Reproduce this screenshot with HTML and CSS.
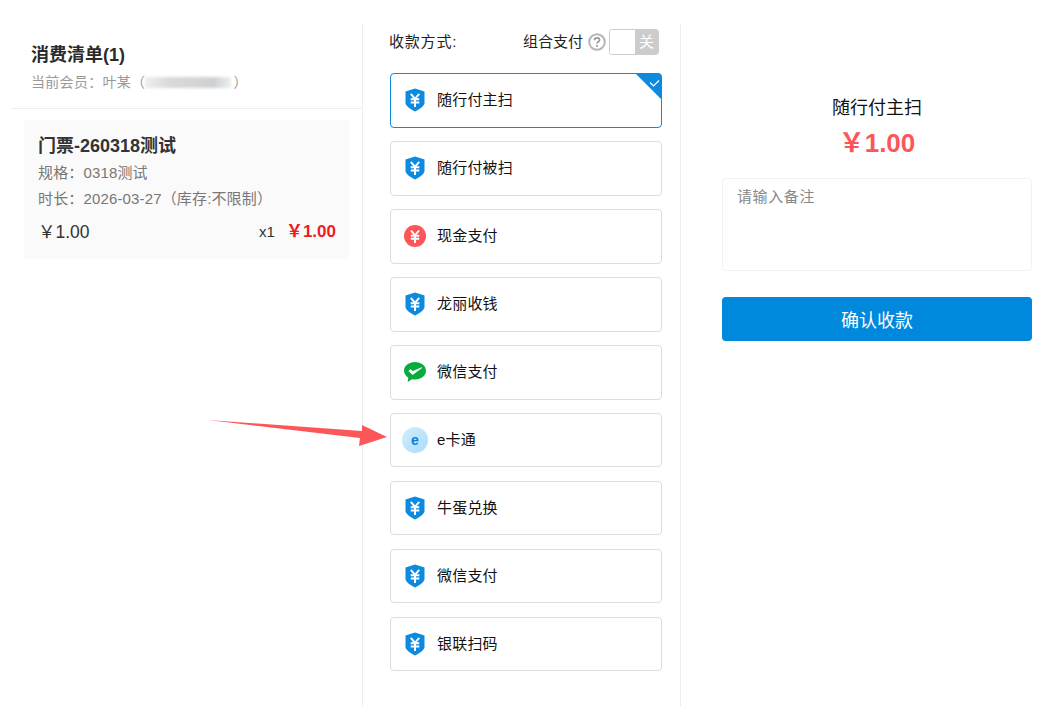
FILE: index.html
```html
<!DOCTYPE html>
<html lang="zh">
<head>
<meta charset="utf-8">
<title>收款</title>
<link rel="stylesheet" href="styles.css">
</head>
<body>
<svg width="0" height="0" class="defs">
  <symbol id="shield" viewBox="0 0 20 24">
    <path d="M10 .5 19.500 3.600V15c0 3-5.500 6.700-9.500 8.500C6 21.700.5 18 .5 15V3.600Z" fill="#0b8ae0"/>
    <path d="M5.800 5.800 10 10.800 14.200 5.800M5.700 11.200H14.300M5.700 14.600H14.300M10 10.800V19" fill="none" stroke="#fff" stroke-width="2"/>
  </symbol>
</svg>
<main class="page">
  <section class="col-list">
    <header class="list-head">
      <h1 class="list-title">消费清单(1)</h1>
      <p class="member">当前会员：叶某（<span class="blur"></span>）</p>
    </header>
    <article class="item">
      <h2 class="item-name">门票-260318测试</h2>
      <p class="item-line">规格：0318测试</p>
      <p class="item-line">时长：2026-03-27（库存:不限制）</p>
      <div class="item-foot">
        <span class="price">￥1.00</span>
        <span class="qty">x1</span>
        <strong class="total">￥1.00</strong>
      </div>
    </article>
  </section>

  <section class="col-pay">
    <div class="pay-head">
      <span class="pay-label">收款方式:</span>
      <div class="combo">
        <span>组合支付</span>
        <svg class="help" width="18" height="18" viewBox="0 0 18 18"><circle cx="9" cy="9" r="7.800" fill="none" stroke="#b5b5b5" stroke-width="2"/><path d="M6.400 7.200C6.500 5.600 7.600 4.800 9 4.800c1.500 0 2.600.9 2.600 2.100 0 1.900-2.600 1.800-2.600 3.700" fill="none" stroke="#999" stroke-width="1.700"/><circle cx="9" cy="13" r="1.100" fill="#999"/></svg>
        <div class="switch"><span class="knob"></span><span class="off">关</span></div>
      </div>
    </div>
    <ul class="methods">
      <li class="method active">
        <svg class="ico"><use href="#shield"/></svg>随行付主扫
        <svg class="corner" width="27" height="27" viewBox="0 0 27 27"><path d="M0 0H22C25 0 27 2 27 5V27Z" fill="#0b8ae0"/><path d="M15 9.500 18.500 13 24 7.500" fill="none" stroke="#fff" stroke-width="1.200"/></svg>
      </li>
      <li class="method"><svg class="ico"><use href="#shield"/></svg>随行付被扫</li>
      <li class="method">
        <svg class="ico-wide" width="22" height="22" viewBox="0 0 22 22"><circle cx="11" cy="11" r="11" fill="#fc5659"/><path d="M7 5.500 11 10.300 15 5.500M6.800 10.800H15.200M6.800 13.800H15.200M11 10.300V18" fill="none" stroke="#fff" stroke-width="1.900"/></svg>现金支付
      </li>
      <li class="method"><svg class="ico"><use href="#shield"/></svg>龙丽收钱</li>
      <li class="method">
        <svg class="ico-wide" width="22" height="22" viewBox="0 0 22 22"><path d="M11 1C5 1 0 4.900 0 9.800c0 2.800 1.700 5.200 4.200 6.700L3.700 21 8 18.300c1 .2 2 .3 3 .3 6 0 11-3.900 11-8.800S17 1 11 1Z" fill="#09ab3f"/><path d="M4.800 10 8.700 13.500 17.800 6.700 8.800 10.400 6.500 8.600Z" fill="#fff" stroke="#fff" stroke-width=".8"/></svg>微信支付
      </li>
      <li class="method short">
        <span class="ecard">e</span>e卡通
      </li>
      <li class="method short"><svg class="ico"><use href="#shield"/></svg>牛蛋兑换</li>
      <li class="method short"><svg class="ico"><use href="#shield"/></svg>微信支付</li>
      <li class="method short"><svg class="ico"><use href="#shield"/></svg>银联扫码</li>
    </ul>
  </section>

  <section class="col-confirm">
    <h2 class="pay-name">随行付主扫</h2>
    <div class="amount">￥1.00</div>
    <textarea class="note" placeholder="请输入备注"></textarea>
    <button class="confirm" type="button">确认收款</button>
  </section>
</main>
<svg class="arrow" width="190" height="40" viewBox="0 0 190 40"><path d="M0 0 154 11 154 5 179 17 151 26 152 18Z" fill="#fc5659"/></svg>
</body>
</html>
```
FILE: styles.css
```css
* { box-sizing: border-box; }
html, body { margin: 0; height: 100%; }
body {
  background: #fff;
  color: #333;
  font-family: "Liberation Sans", "Noto Sans CJK SC", sans-serif;
  font-size: 14px;
  overflow: hidden;
  position: relative;
}
.defs { position: absolute; }
p, h1, h2, ul { margin: 0; padding: 0; }
.page {
  display: flex;
  height: 706px;
  padding-top: 24px;
}
.col-list {
  width: 363px;
  flex: none;
  padding-left: 11px;
  border-right: 1px solid #eee;
}
.list-head {
  height: 85px;
  padding: 20px 0 0 20px;
  border-bottom: 1px solid #eee;
}
.list-title {
  font-size: 18px;
  line-height: 22px;
  font-weight: 700;
  color: #2b2b2b;
}
.member {
  margin-top: 6px;
  font-size: 14px;
  letter-spacing: .3px;
  line-height: 20px;
  color: #999;
  display: flex;
  align-items: center;
}
.blur {
  width: 86px;
  height: 11px;
  background: linear-gradient(90deg, #eee, #d8d8d8 30%, #d4d4d4 60%, #cdd0d2 80%, #eee);
  filter: blur(1.500px);
  margin: 0 2px 0 0;
}
.item {
  margin: 11px 13px 0;
  height: 139px;
  padding: 14px 14px 0;
  background: #fafafa;
  border-radius: 3px;
}
.item-name {
  font-size: 18px;
  line-height: 24px;
  font-weight: 700;
  color: #333;
}
.item-line {
  margin-top: 4px;
  font-size: 15px;
  letter-spacing: .15px;
  line-height: 21px;
  color: #777;
}
.item-line + .item-line { margin-top: 5px; }
.item-foot {
  display: flex;
  align-items: center;
  margin-top: 11px;
  line-height: 24px;
}
.price { font-size: 17.500px; color: #333; flex: 1; }
.qty { font-size: 15px; color: #333; margin-right: 11px; }
.total { font-size: 17px; color: #ee1c25; margin-right: -1px; }

.col-pay {
  width: 318px;
  flex: none;
  padding: 0 18px 0 27px;
  border-right: 1px solid #eee;
}
.pay-head {
  height: 36px;
  padding-top: 5px;
  display: flex;
  justify-content: space-between;
  align-items: flex-start;
  font-size: 15px;
  line-height: 26px;
  color: #222;
}
.pay-label { margin-left: -1px; letter-spacing: .8px; }
.combo { display: flex; align-items: flex-start; margin-right: 3px; }
.help { margin: 4px 3px 0 5px; }
.switch {
  display: flex;
  width: 50px;
  height: 26px;
  border: 1px solid #ccc;
  border-radius: 3px;
  overflow: hidden;
}
.knob { width: 25px; background: #fff; }
.off {
  flex: 1;
  background: #ccc;
  color: #fff;
  text-align: center;
  line-height: 23px;
}
.methods {
  list-style: none;
  margin-top: 13px;
  width: 272px;
  display: flex;
  flex-direction: column;
  gap: 13px;
}
.method {
  position: relative;
  height: 55px;
  padding: 0 0 2px 14px;
  display: flex;
  align-items: center;
  border: 1px solid #ddd;
  border-radius: 4px;
  font-size: 15px;
  letter-spacing: .2px;
  line-height: 20px;
  color: #111;
  background: #fff;
}
.method.short { height: 54px; margin-bottom: 1px; padding-bottom: 0; }
.method.active { border-color: #0b8ae0; }
.ico { width: 20px; height: 24px; margin-right: 12px; flex: none; }
.ico-wide { margin: 0 11px 0 -1px; flex: none; }
.corner { position: absolute; top: -1px; right: -1px; }
.ecard {
  width: 26px;
  height: 26px;
  margin: 0 9px 0 -3px;
  border-radius: 50%;
  background: linear-gradient(135deg, #d3edfd, #aadcfb);
  color: #0b7fd6;
  font-size: 14px;
  font-weight: 700;
  text-align: center;
  line-height: 27px;
  flex: none;
}

.col-confirm {
  flex: 1;
  padding: 0 30px 0 41px;
  display: flex;
  flex-direction: column;
  align-items: stretch;
}
.pay-name {
  margin-top: 72px;
  font-size: 18px;
  line-height: 24px;
  font-weight: 400;
  color: #111;
  text-align: center;
}
.amount {
  margin-top: 8px;
  font-size: 26px;
  line-height: 30px;
  font-weight: 700;
  color: #fc5659;
  text-align: center;
}
.note {
  display: block;
  margin-top: 20px;
  height: 93px;
  flex: none;
  padding: 6px 14px;
  border: 1px solid #f2f2f2;
  border-radius: 4px;
  font-family: inherit;
  font-size: 15px;
  letter-spacing: .6px;
  resize: none;
  outline: none;
}
.note::placeholder { color: #888; opacity: 1; }
.confirm {
  margin-top: 26px;
  height: 44px;
  flex: none;
  border: 0;
  border-radius: 4px;
  background: #0088dd;
  color: #fff;
  font-family: inherit;
  font-size: 18px;
}
.arrow { position: absolute; left: 208px; top: 420px; }
```
